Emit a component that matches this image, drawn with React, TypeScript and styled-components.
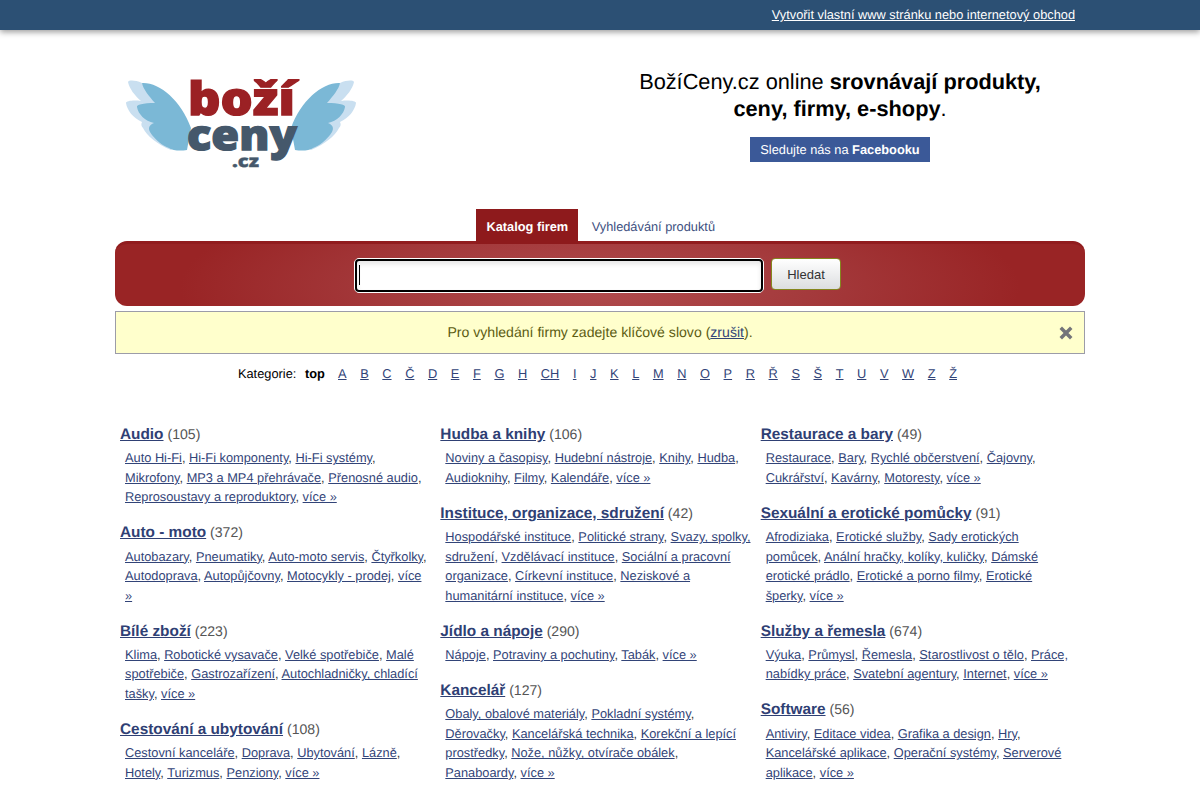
import React from 'react';
import styled, { createGlobalStyle } from 'styled-components';

const letters = ['A', 'B', 'C', 'Č', 'D', 'E', 'F', 'G', 'H', 'CH', 'I', 'J', 'K', 'L', 'M', 'N', 'O', 'P', 'R', 'Ř', 'S', 'Š', 'T', 'U', 'V', 'W', 'Z', 'Ž'];

type Category = { title: string; count: number; links: string[] };

const columns: Category[][] = [
  [
    { title: 'Audio', count: 105, links: ['Auto Hi-Fi', 'Hi-Fi komponenty', 'Hi-Fi systémy', 'Mikrofony', 'MP3 a MP4 přehrávače', 'Přenosné audio', 'Reprosoustavy a reproduktory'] },
    { title: 'Auto - moto', count: 372, links: ['Autobazary', 'Pneumatiky', 'Auto-moto servis', 'Čtyřkolky', 'Autodoprava', 'Autopůjčovny', 'Motocykly - prodej'] },
    { title: 'Bílé zboží', count: 223, links: ['Klima', 'Robotické vysavače', 'Velké spotřebiče', 'Malé spotřebiče', 'Gastrozařízení', 'Autochladničky, chladící tašky'] },
    { title: 'Cestování a ubytování', count: 108, links: ['Cestovní kanceláře', 'Doprava', 'Ubytování', 'Lázně', 'Hotely', 'Turizmus', 'Penziony'] },
  ],
  [
    { title: 'Hudba a knihy', count: 106, links: ['Noviny a časopisy', 'Hudební nástroje', 'Knihy', 'Hudba', 'Audioknihy', 'Filmy', 'Kalendáře'] },
    { title: 'Instituce, organizace, sdružení', count: 42, links: ['Hospodářské instituce', 'Politické strany', 'Svazy, spolky, sdružení', 'Vzdělávací instituce', 'Sociální a pracovní organizace', 'Církevní instituce', 'Neziskové a humanitární instituce'] },
    { title: 'Jídlo a nápoje', count: 290, links: ['Nápoje', 'Potraviny a pochutiny', 'Tabák'] },
    { title: 'Kancelář', count: 127, links: ['Obaly, obalové materiály', 'Pokladní systémy', 'Děrovačky', 'Kancelářská technika', 'Korekční a lepící prostředky', 'Nože, nůžky, otvírače obálek', 'Panaboardy'] },
  ],
  [
    { title: 'Restaurace a bary', count: 49, links: ['Restaurace', 'Bary', 'Rychlé občerstvení', 'Čajovny', 'Cukrářství', 'Kavárny', 'Motoresty'] },
    { title: 'Sexuální a erotické pomůcky', count: 91, links: ['Afrodiziaka', 'Erotické služby', 'Sady erotických pomůcek', 'Anální hračky, kolíky, kuličky', 'Dámské erotické prádlo', 'Erotické a porno filmy', 'Erotické šperky'] },
    { title: 'Služby a řemesla', count: 674, links: ['Výuka', 'Průmysl', 'Řemesla', 'Starostlivost o tělo', 'Práce, nabídky práce', 'Svatební agentury', 'Internet'] },
    { title: 'Software', count: 56, links: ['Antiviry', 'Editace videa', 'Grafika a design', 'Hry', 'Kancelářské aplikace', 'Operační systémy', 'Serverové aplikace'] },
  ],
];

const GlobalStyle = createGlobalStyle`
  html, body {
    margin: 0;
    padding: 0;
    height: 800px;
    overflow: hidden;
    background: #fff;
    font-family: "Liberation Sans", Arial, sans-serif;
    font-size: 12.8px;
    color: #333;
    text-rendering: geometricPrecision;
  }
`;

const TopBar = styled.div`
  height: 30px;
  background: #2c5074;
  box-shadow: 0 2px 6px rgba(0, 0, 0, 0.4);
`;

const TopBarInner = styled.div`
  width: 950px;
  margin: 0 auto;
  display: flex;
  justify-content: flex-end;
  line-height: 30px;
`;

const TopLink = styled.a`
  color: #fff;
  text-decoration: underline;
`;

const Page = styled.div`
  width: 970px;
  margin: 0 auto;
`;

const Header = styled.div`
  display: flex;
  height: 179px;
`;

const LogoBox = styled.div`
  width: 500px;
  padding: 30px 0 0 8px;
  box-sizing: border-box;
`;

const Tagline = styled.div`
  width: 450px;
  text-align: center;
  padding-top: 39px;
`;

const TaglineText = styled.div`
  font-size: 21.76px;
  line-height: 26.5px;
  color: #000;
`;

const FacebookLink = styled.a`
  display: inline-block;
  margin-top: 15px;
  height: 25px;
  line-height: 25px;
  padding: 0 10px;
  background: #3b5998;
  color: #fff;
`;

const Tabs = styled.div`
  display: flex;
  justify-content: center;
  position: relative;
  z-index: 1;
  margin-left: 5px;
  height: 32px;
`;

const Tab = styled.a<{ $active?: boolean }>`
  height: 35px;
  line-height: 35px;
  padding: 0 ${(p) => (p.$active ? '10px' : '13.5px')};
  font-weight: ${(p) => (p.$active ? 700 : 400)};
  color: ${(p) => (p.$active ? '#fff' : '#3d4f80')};
  background: ${(p) => (p.$active ? '#8e1a1c' : 'transparent')};
`;

const SearchBar = styled.form`
  height: 65px;
  margin: 0;
  box-sizing: border-box;
  border-top: 3px solid #911c1e;
  border-radius: 12px;
  background: radial-gradient(ellipse 420px 110px at 50% 70%, #b04b4d 0%, #a43a3c 50%, #992425 100%);
  display: flex;
  justify-content: center;
  padding: 14px 5px 0 0;
  gap: 7px;
`;

const SearchInput = styled.div`
  width: 410px;
  height: 35px;
  box-sizing: border-box;
  border: 1px solid #fff;
  border-radius: 5px;
  background: #fff;
  position: relative;
  &::before {
    content: '';
    position: absolute;
    inset: 0;
    border: 2px solid #000;
    border-radius: 4px;
    box-shadow: inset 0 3px 5px rgba(0, 0, 0, 0.1);
  }
  &::after {
    content: '';
    position: absolute;
    left: 4px;
    top: 6px;
    width: 1px;
    height: 20px;
    background: #000;
  }
`;

const SearchButton = styled.button`
  width: 70px;
  height: 32px;
  box-sizing: border-box;
  border: 1px solid #85861e;
  border-radius: 4px;
  background: linear-gradient(#ffffff, #dcdee0);
  color: #333;
  font-family: "Liberation Sans", Arial, sans-serif;
  font-size: 13px;
`;

const Notice = styled.div`
  margin-top: 5px;
  height: 43px;
  box-sizing: border-box;
  border: 1px solid #9c9ca8;
  background: #ffffcc;
  color: #5c5c12;
  font-size: 14.08px;
  line-height: 41px;
  text-align: center;
  position: relative;
`;

const NoticeLink = styled.a`
  color: #324478;
  text-decoration: underline;
`;

const CloseIcon = styled.svg`
  position: absolute;
  right: 10px;
  top: 13px;
`;

const AlphaRow = styled.div`
  display: flex;
  justify-content: center;
  gap: 13.6px;
  margin: 10px 0 0 -5px;
  line-height: 19px;
  color: #000;
`;

const AlphaLabel = styled.span`
  margin-right: -5px;
`;

const AlphaTop = styled.b`
  margin-right: -0.4px;
`;

const AlphaLink = styled.a`
  color: #324478;
  text-decoration: underline;
`;

const Catalog = styled.div`
  display: grid;
  grid-template-columns: repeat(3, 320.33px);
  margin: 39px 0 0 5px;
`;

const Column = styled.div``;

const Block = styled.div`
  margin-bottom: 13.4px;
`;

const BlockTitle = styled.div`
  line-height: 24px;
  font-size: 14.08px;
  color: #555;
`;

const TitleLink = styled.a`
  font-size: 15.36px;
  font-weight: 700;
  color: #2f4074;
  text-decoration: underline;
`;

const LinkList = styled.div`
  padding: 1.4px 0 0 5px;
  width: 306px;
  line-height: 19.5px;
  color: #333;
`;

const ListLink = styled.a`
  color: #324478;
  text-decoration: underline;
`;

const Wing: React.FC<{ mirror?: boolean }> = ({ mirror }) => (
  <g transform={mirror ? 'translate(236 0) scale(-1 1)' : undefined}>
    <path
      fill="#c9dff0"
      d="M19 11 C12 8 6 8 5 10 C6 16 12 24 18 29 C10 28 3 29 3 31 C4 38 10 46 19 50 C18 52 18 54 20 56 C24 64 34 72 48 78 L60 60 Z"
    />
    <path
      fill="#7bb8d6"
      d="M19 11 C36 10 58 28 68 56 L64 78 C58 79 50 79 46 76 C40 74 32 68 27 60 C25 56 26 53 31 51 C22 49 15 42 14 35 C13 33 20 31 32 31 C26 24 20 17 19 11 Z"
    />
  </g>
);

const Logo = () => (
  <svg width="236" height="118" viewBox="0 -12 236 118">
    <Wing />
    <Wing mirror />
    <g fontFamily="'Open Sans', sans-serif" fontWeight="800">
      <text x="65" y="43" fontSize="46" fill="#9b2124" stroke="#9b2124" strokeWidth="1.3" textLength="107" lengthAdjust="spacingAndGlyphs">boží</text>
      <text x="64" y="78" fontSize="42" fill="#45586b" stroke="#45586b" strokeWidth="1.3" textLength="110" lengthAdjust="spacingAndGlyphs">ceny</text>
      <text x="109" y="95" fontSize="17" fill="#45586b" stroke="#45586b" strokeWidth="0.4" textLength="27" lengthAdjust="spacingAndGlyphs">.cz</text>
    </g>
  </svg>
);

const App: React.FC = () => (
  <>
    <GlobalStyle />
    <TopBar>
      <TopBarInner>
        <TopLink>Vytvořit vlastní www stránku nebo internetový obchod</TopLink>
      </TopBarInner>
    </TopBar>
    <Page>
      <Header>
        <LogoBox>
          <Logo />
        </LogoBox>
        <Tagline>
          <TaglineText>
            BožíCeny.cz online <b>srovnávají produkty,</b>
            <br />
            <b>ceny, firmy, e-shopy</b>.
          </TaglineText>
          <FacebookLink>
            Sledujte nás na <b>Facebooku</b>
          </FacebookLink>
        </Tagline>
      </Header>
      <Tabs>
        <Tab $active>Katalog firem</Tab>
        <Tab>Vyhledávání produktů</Tab>
      </Tabs>
      <SearchBar>
        <SearchInput />
        <SearchButton type="button">Hledat</SearchButton>
      </SearchBar>
      <Notice>
        Pro vyhledání firmy zadejte klíčové slovo (<NoticeLink>zrušit</NoticeLink>).
        <CloseIcon width="16" height="16" viewBox="0 0 16 16">
          <path d="M4 4 L12 12 M12 4 L4 12" stroke="#74757a" strokeWidth="3.5" strokeLinecap="square" />
        </CloseIcon>
      </Notice>
      <AlphaRow>
        <AlphaLabel>Kategorie:</AlphaLabel>
        <AlphaTop>top</AlphaTop>
        {letters.map((l) => (
          <AlphaLink key={l}>{l}</AlphaLink>
        ))}
      </AlphaRow>
      <Catalog>
        {columns.map((col, i) => (
          <Column key={i}>
            {col.map((cat) => (
              <Block key={cat.title}>
                <BlockTitle>
                  <TitleLink>{cat.title}</TitleLink> ({cat.count})
                </BlockTitle>
                <LinkList>
                  {cat.links.map((l) => (
                    <React.Fragment key={l}>
                      <ListLink>{l}</ListLink>,{' '}
                    </React.Fragment>
                  ))}
                  <ListLink>více »</ListLink>
                </LinkList>
              </Block>
            ))}
          </Column>
        ))}
      </Catalog>
    </Page>
  </>
);

export default App;
